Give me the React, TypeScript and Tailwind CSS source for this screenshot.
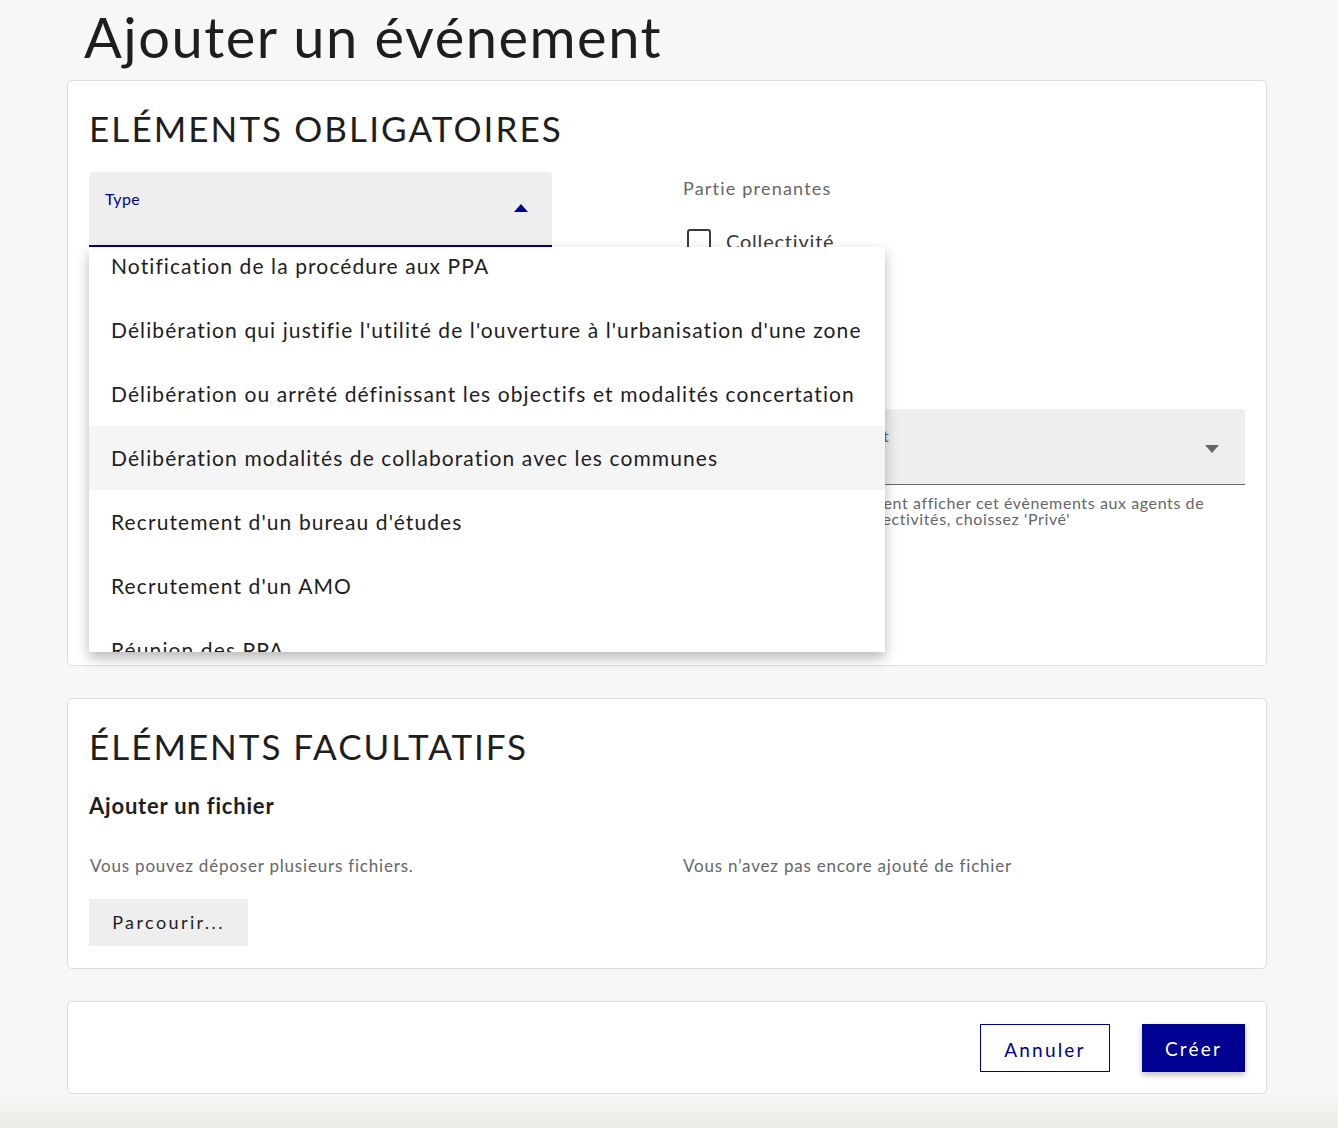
import React from 'react'

const TYPE_OPTIONS = [
  "Notification de la procédure aux PPA",
  "Délibération qui justifie l'utilité de l'ouverture à l'urbanisation d'une zone",
  "Délibération ou arrêté définissant les objectifs et modalités concertation",
  "Délibération modalités de collaboration avec les communes",
  "Recrutement d'un bureau d'études",
  "Recrutement d'un AMO",
  "Réunion des PPA",
  "Réunion publique",
]

const HIGHLIGHTED = 3

function Checkbox({ label }: { label: string }) {
  return (
    <label className="flex items-center gap-[15px]">
      <span className="w-[24px] h-[24px] rounded-[3px] border-2 border-[#3a3a3a] bg-white" />
      <span className="text-[20px] tracking-[0.8px] text-[#3a3a3a]">{label}</span>
    </label>
  )
}

export default function App() {
  return (
    <div className="min-h-[1128px] bg-[linear-gradient(to_bottom,#f8f7f5_1095px,#ecebe8)] font-['Lato',sans-serif] text-[#1e1e1e]">
      <div className="w-[1200px] ml-[67px]">
        <h1 className="pl-[17px] h-[80px] text-[56px] leading-[74px] tracking-[1.5px] text-[#1e1e1e]">Ajouter un événement</h1>

        {/* Eléments obligatoires */}
        <section className="h-[586px] bg-white border border-[#dddddd] rounded-[5px] px-[21px] pt-[27px]">
          <h2 className="text-[35px] leading-[40px] tracking-[2.1px] uppercase">Eléments obligatoires</h2>

          <div className="flex mt-[24px]">
            {/* left column */}
            <div className="w-[594px] shrink-0">
              <div className="relative w-[463px]">
                <div className="h-[75px] bg-[#eeeeee] rounded-t-[4px] border-b-2 border-[#000091] px-[16px] pt-[16px] flex justify-between">
                  <span className="text-[16px] leading-[22px] tracking-[0.3px] text-[#000091]">Type</span>
                  <svg className="mt-[16px] mr-[8px]" width="14" height="8" viewBox="0 0 14 8">
                    <path d="M0 8 L7 0 L14 8 Z" fill="#000091" />
                  </svg>
                </div>

                {/* open menu */}
                <div className="absolute z-10 left-0 top-[75px] w-[796px] h-[405px] bg-white overflow-hidden shadow-[0_6px_12px_rgba(0,0,0,0.28)]">
                  <ul className="-mt-[13px]">
                    {TYPE_OPTIONS.map((opt, i) => (
                      <li
                        key={opt}
                        className={`h-[64px] flex items-center px-[22px] text-[21px] tracking-[1.1px] whitespace-nowrap ${
                          i === HIGHLIGHTED ? 'bg-[#f5f5f5]' : 'bg-white'
                        }`}
                      >
                        {opt}
                      </li>
                    ))}
                  </ul>
                </div>
              </div>
            </div>

            {/* right column */}
            <div className="w-[562px]">
              <p className="pt-[4px] text-[18px] leading-[24px] text-[#666666] tracking-[1.2px]">Partie prenantes</p>
              <div className="mt-[26px] ml-[4px] space-y-[24px]">
                <Checkbox label="Collectivité" />
                <Checkbox label="État" />
              </div>

              <div className="mt-[99px] h-[76px] bg-[#eeeeee] rounded-t-[4px] border-b border-[#666666] px-[16px] pt-[16px] flex justify-between">
                <span className="text-[16px] leading-[22px] tracking-[0.8px] text-[#666666]">Visibilité de l'évènement</span>
                <svg className="mt-[20px] mr-[10px]" width="14" height="8" viewBox="0 0 14 8">
                  <path d="M0 0 L7 8 L14 0 Z" fill="#666666" />
                </svg>
              </div>
              <p className="mt-[10px] text-[16px] leading-[16px] tracking-[0.6px] text-[#666666]">
                Si vous souhaitez uniquement afficher cet évènements aux agents de<br />
                l'administration et aux collectivités, choissez 'Privé'
              </p>
            </div>
          </div>
        </section>

        {/* Eléments facultatifs */}
        <section className="mt-[32px] h-[271px] bg-white border border-[#dddddd] rounded-[5px] px-[21px] pt-[27px]">
          <h2 className="text-[35px] leading-[40px] tracking-[2px] uppercase">Éléments facultatifs</h2>
          <h3 className="mt-[26px] text-[22px] leading-[28px] font-bold tracking-[0.8px]">Ajouter un fichier</h3>
          <div className="flex mt-[36px]">
            <div className="w-[594px] shrink-0">
              <p className="pl-[1px] text-[17px] leading-[20px] text-[#666666] tracking-[0.8px]">Vous pouvez déposer plusieurs fichiers.</p>
              <button className="mt-[23px] h-[47px] w-[159px] bg-[#eeeeee] text-[18px] tracking-[2.4px] text-[#1e1e1e]">
                Parcourir...
              </button>
            </div>
            <p className="text-[17px] leading-[20px] text-[#666666] tracking-[0.8px]">Vous n’avez pas encore ajouté de fichier</p>
          </div>
        </section>

        {/* actions */}
        <div className="mt-[32px] h-[93px] bg-white border border-[#dddddd] rounded-[5px] px-[21px] flex items-center justify-end gap-[32px]">
          <button className="h-[48px] w-[130px] border border-[#000091] text-[#000091] text-[19px] leading-[50px] tracking-[2.2px] bg-white">
            Annuler
          </button>
          <button className="h-[48px] w-[103px] bg-[#000091] text-white text-[19px] leading-[50px] tracking-[2.2px] shadow-[0_3px_6px_rgba(0,0,0,0.25)]">
            Créer
          </button>
        </div>
      </div>
    </div>
  )
}
